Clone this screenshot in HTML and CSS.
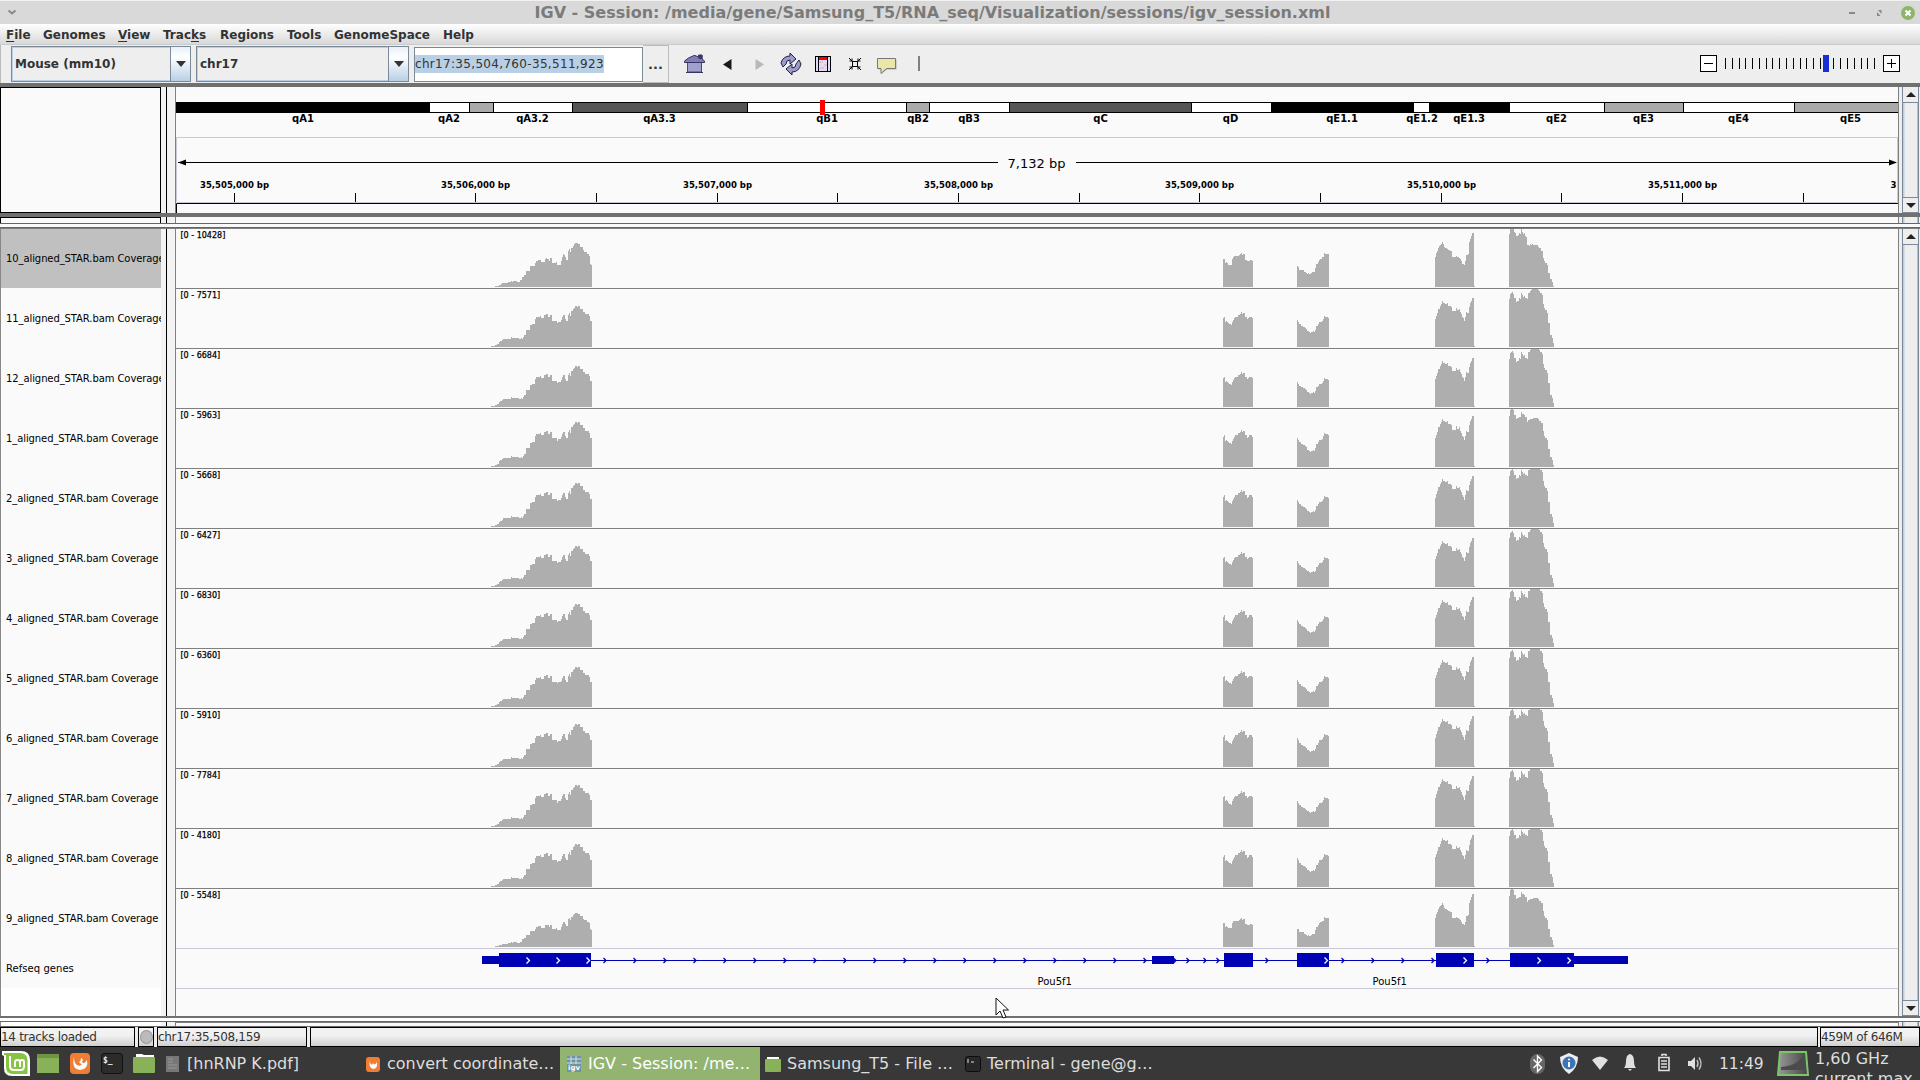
FILE: index.html
```html
<!DOCTYPE html>
<html lang="en">
<head>
<meta charset="utf-8">
<title>IGV - Session</title>
<link rel="stylesheet" href="styles.css">
</head>
<body>
<header class="titlebar">
  <svg class="win-menu" width="10" height="8" viewBox="0 0 10 8"><path d="M1.5 1.5L5 4.5L8.500 1.500" fill="none" stroke="#888" stroke-width="2"/></svg>
  <h1 class="title">IGV - Session: /media/gene/Samsung_T5/RNA_seq/Visualization/sessions/igv_session.xml</h1>
  <svg class="win-buttons" width="72" height="18" viewBox="0 0 72 18">
    <rect x="5" y="8" width="6" height="2" fill="#888"/>
    <path d="M34 6h3.500v4zM33 8v4h3.500z" fill="#888"/>
    <circle cx="64" cy="9" r="7" fill="#8fb56a"/><path d="M61.500 6.500l5 5m0-5l-5 5" stroke="#fff" stroke-width="2"/>
  </svg>
</header>
<nav class="menubar">
  <span class="m-file"><u>F</u>ile</span><span class="m-genomes">Genomes</span><span class="m-view"><u>V</u>iew</span><span class="m-tracks">Trac<u>k</u>s</span><span class="m-regions">Regions</span><span class="m-tools">Tools</span><span class="m-space">GenomeSpace</span><span>Help</span>
</nav>
<div class="toolbar">
  <div class="combo genome"><span>Mouse (mm10)</span><i></i></div>
  <div class="combo chrom"><span>chr17</span><i></i></div>
  <div class="locus"><mark>chr17:35,504,760-35,511,923</mark></div>
  <button class="more">...</button>
  <div class="icons">
    <svg viewBox="0 0 32 32"><rect x="8.500" y="14" width="14" height="10" fill="#a09fce" stroke="#4c497c"/><path d="M5.500 14.500v-1.500l4-3 5.500-2.500h1l3.500 1.500V7h3.500v4l2.500 2v1.500z" fill="#7f7db5" stroke="#37345f"/><rect x="19.500" y="7" width="4" height="4" fill="#3c3a66"/><path d="M7 24.500h17" stroke="#37345f"/></svg>
    <svg viewBox="0 0 32 32"><path d="M20.500 11v11L12 16.500z" fill="#1a1a1a"/></svg>
    <svg viewBox="0 0 32 32"><path d="M12.500 11v11l8.500-5.500z" fill="#b8b8b8"/></svg>
    <svg viewBox="0 0 32 32" fill="#9c9bd0" stroke="#20203c" stroke-width="1"><path d="M6 15q2-7 9-7V5l6 6-6 5v-4q-4 0-4 4l-3 3z"/><path d="M26 16q-2 8-9 8v3l-6-6 6-5v4q4 0 4-4l3-4z"/></svg>
    <svg viewBox="0 0 32 32"><rect x="8.500" y="8.500" width="15" height="15" fill="#dcdcf8" stroke="#000"/><path d="M11.500 9v14M20.500 9v14" stroke="#000"/><rect x="12" y="9" width="8" height="3" fill="red"/><path d="M12 14h4m1 3h3m-7 3h4" stroke="#f3bcc6" stroke-width="2"/></svg>
    <svg viewBox="0 0 32 32" stroke="#000" fill="none"><rect x="13.500" y="13.500" width="5" height="5"/><path d="M10 10l3 3m9-3l-3 3m-9 9l3-3m9 3l-3-3M10.500 13H13v-2.500M21.500 13H19v-2.500M10.500 19H13v2.500M21.500 19H19v2.500"/></svg>
    <svg viewBox="0 0 32 32"><path d="M7.500 11.500h18v10H16l-5 4v-4H7.500z" fill="#888" opacity=".6"/><path d="M6.500 10.500h18v10h-9l-5.500 5v-5H6.500z" fill="#ece6a8" stroke="#777"/></svg>
    <svg viewBox="0 0 32 32"><rect x="15" y="8" width="2" height="15" fill="#808080"/></svg>
  </div>
  <svg class="zoomer" width="202" height="20" viewBox="0 0 202 20"><g stroke="#000" fill="#fff"><rect x=".5" y="1.500" width="16" height="16"/><rect x="183.500" y="1.500" width="16" height="16"/><path d="M4 9.500h9M187 9.500h9M191.500 5v9"/></g><g id="zoom-ticks" fill="#000"></g><rect x="123" y="1" width="6" height="17" fill="#1a2fd0"/></svg>
</div>
<main>
  <section class="pane head">
    <div class="names boxed"></div><div class="gutter"></div>
    <div class="data"><svg id="ruler" width="1723" height="126" viewBox="176 87 1723 126"></svg></div>
    <div class="scroll"><b class="up"></b><b class="down"></b></div>
  </section>
  <section class="pane strip"><div class="names boxed"></div><div class="gutter"></div><div class="data"></div><div class="scroll"></div></section>
  <div class="divider"></div>
  <section class="pane tracks">
    <div class="names" id="names"></div><div class="gutter"></div>
    <div class="data"><div id="coverage"></div>
      <svg id="genes" width="1723" height="39" viewBox="176 949 1723 39"></svg>
    </div>
    <div class="scroll"><b class="up"></b><b class="down"></b></div>
  </section>
  <div class="divider low"></div>
  <section class="pane foot"><div class="names"></div><div class="gutter"></div><div class="data"></div><div class="scroll"></div></section>
</main>
<footer class="status">
  <div class="s1">14 tracks loaded</div><div class="s2"><i></i></div><div class="s3">chr17:35,508,159</div><div class="s4"></div><div class="s5">459M of 646M</div>
</footer>
<div class="taskbar">
  <svg class="launch" width="164" height="33" viewBox="0 0 164 33">
    <path d="M2 4h19q9 0 9 9v16H12q-8 0-8-8V9L2 8z" fill="#fff"/><path d="M4 6h16q7.500 0 7.500 7.500V27H13q-7 0-7-7V8H4z" fill="#86c442"/><path d="M10 9v10q0 4 4 4h7q3 0 3-4v-4q0-2-2-2t-2 2v5m0-5q0-2-2.500-2t-2.500 2v5" fill="none" stroke="#fff" stroke-width="2"/>
    <rect x="37" y="7" width="22" height="19" fill="#88b158"/><rect x="37" y="7" width="22" height="4" fill="#6d9544"/>
    <rect x="70" y="6" width="20" height="21" rx="4" fill="#ef7d34"/><path d="M74 10q-3 12 6 13 9-1 7-10-3 5-5 2 2-3-1-4 0 3-2 4 1 2 3 2-2 3-5 1-3-2-3-8z" fill="#fff"/>
    <rect x="101.500" y="6.500" width="21" height="20" rx="3" fill="#2b2b2b" stroke="#111"/><text x="103" y="16" class="prompt">$_</text>
    <path d="M136 7h6l2 1h10v4h-18z" fill="#fff"/><rect x="133" y="10" width="22" height="16" rx="1" fill="#88b158"/>
  </svg>
  <div class="task pdf"><svg width="16" height="18"><path d="M1 1h13v16H1z" fill="#777"/><path d="M3 4h5M3 7h5M3 10h9M3 13h9" stroke="#999"/></svg><span>[hnRNP K.pdf]</span></div>
  <div class="task web"><svg width="16" height="18"><rect x="1" y="2" width="14" height="15" rx="3" fill="#ef7d34"/><path d="M5 5q-2 7 3 9 5 0 4-7-2 4-4 1l-1 2-2-2z" fill="#fff"/></svg><span>convert coordinate…</span></div>
  <div class="task active"><svg width="16" height="18"><path d="M1 1h14v16H1z" fill="#6d93a5"/><path d="M1 4h14M5 1v8M10 1v8M1 8h14" stroke="#d5e1e5"/><text x="2" y="15" class="tiny">igv</text></svg><span>IGV - Session: /me…</span></div>
  <div class="task files"><svg width="16" height="18"><path d="M2 2h12v4H2z" fill="#fff"/><rect x="0" y="4" width="16" height="13" rx="1" fill="#88b158"/></svg><span>Samsung_T5 - File …</span></div>
  <div class="task term"><svg width="16" height="18"><rect x=".5" y="1.500" width="15" height="15" rx="2" fill="#282828" stroke="#0c0c0c"/><path d="M3 4v4M6 7h3" stroke="#ddd"/></svg><span>Terminal - gene@g…</span></div>
  <svg class="tray" width="180" height="33" viewBox="1528 0 180 33">
    <rect x="1530" y="7" width="15" height="20" rx="7.500" fill="#666"/><path d="M1533.500 12.500l8 8-4 4V9l4 4-8 8" fill="none" stroke="#fff" stroke-width="1.400"/>
    <path d="M1569 6l9 4q0 11-9 17-9-6-9-17z" fill="#eee"/><circle cx="1569" cy="16" r="6.500" fill="#3c74b8"/><path d="M1569 15v5" stroke="#fff" stroke-width="2"/><circle cx="1569" cy="12.500" r="1" fill="#fff"/>
    <path d="M1592 13q8-7 16 0l-8 10z" fill="#e0e0e0"/>
    <path d="M1624 21q2-2 2-7 0-6 4-7 4 1 4 7 0 5 2 7zM1628 22h4l-2 2z" fill="#e0e0e0"/>
    <path d="M1659 10.500h10v13h-10zM1662 9v-1.500h4V9M1661 14h6m-6 3h6m-6 3h6" fill="none" stroke="#e0e0e0" stroke-width="1.600"/>
    <path d="M1688 14h3l4-4v13l-4-4h-3z" fill="#e0e0e0"/><path d="M1697 13q2 3.500 0 7M1699 10.500q4 6 0 12" fill="none" stroke="#bbb" stroke-width="1.500"/>
  </svg>
  <time>11:49</time>
  <svg class="cpu" width="32" height="28" viewBox="0 0 32 28"><defs><linearGradient id="g"><stop offset="0" stop-color="#999"/><stop offset="1" stop-color="#444"/></linearGradient></defs><path d="M3 2h26l2 23H1z" fill="url(#g)" stroke="#7cc46c" stroke-width="2"/><path d="M4 17Q21 16 27 4v16H4z" fill="#4b4b4b"/></svg>
  <div class="freq">1,60 GHz<br>current max</div>
</div>
<svg class="pointer" width="16" height="24" viewBox="0 0 16 24"><path d="M1 1v17l4-4 3 7 3-1-3-7h5.500z" fill="#fff" stroke="#111"/></svg>
<script src="script.js"></script>
</body>
</html>
```
FILE: styles.css
```css
* { box-sizing: border-box; }
body { margin: 0; width: 1920px; height: 1080px; overflow: hidden; display: flex; flex-direction: column; background: #eee; font: 12px "DejaVu Sans", sans-serif; color: #333; }
body > * { flex-shrink: 0; }
svg { display: block; flex: none; }
.titlebar { height: 24px; background: #d9d9d9; border-top: 1px solid #f2f2f2; display: flex; align-items: center; padding: 0 4px 0 7px; }
.title { flex: 1; margin: 0; padding-left: 4px; text-align: center; font: bold 16px "DejaVu Sans", sans-serif; color: #7b7b7b; white-space: nowrap; }
.menubar { height: 21px; background: linear-gradient(#fff, #d8d8d8); border-bottom: 1px solid #ccc; display: flex; align-items: center; font-weight: bold; padding: 1px 0 0 6px; white-space: nowrap; }
.menubar span { flex: none; }
.menubar u { text-underline-offset: 2px; }
.m-file { width: 37px; }
.m-genomes { width: 75px; }
.m-view { width: 45px; }
.m-tracks { width: 57px; }
.m-regions { width: 67px; }
.m-tools { width: 47px; }
.m-space { width: 109px; }
.toolbar { height: 38px; border-left: 1px solid #bbb; display: flex; align-items: center; padding-left: 10px; }
.combo { display: flex; height: 36px; border: 1px solid #7a8a99; font-weight: bold; align-items: center; box-shadow: inset 0 0 0 1px #b8cfe5; padding-left: 3px; }
.combo span { flex: 1; }
.combo i { width: 20px; height: 34px; border-left: 1px solid #7a8a99; background: linear-gradient(#e8f0f8, #fff 30%, #b8cfe5); display: grid; place-items: center; }
.combo i::after { content: ""; border: 5.500px solid transparent; border-top: 6px solid #333; border-bottom: 0; }
.genome { width: 180px; margin-right: 5px; }
.chrom { width: 213px; margin-right: 5px; }
.locus { width: 229px; height: 35px; background: #fff; border: 1px solid #7a8a99; display: flex; align-items: center; }
.locus mark { background: #b8cfe5; color: #333; letter-spacing: .32px; padding: 2px 0; }
.more { width: 26px; height: 38px; border: 1px solid #bbb; border-left: 0; background: #eee; padding: 0; font: bold 13px "DejaVu Sans", sans-serif; color: #333; }
.icons { display: flex; padding-left: 10px; flex: 1; }
.icons svg { width: 32px; height: 32px; }
.zoomer { margin-right: 18px; }
.pane { display: flex; }
.names { width: 161px; border-left: 1px solid #888; background: #fff; overflow: hidden; flex: none; }
.boxed { border: 1px solid #000; background: #fafafa; }
.gutter { width: 14px; flex: none; background: linear-gradient(90deg, #f3f3f3 5px, #000 5px 6px, #f3f3f3 6px); }
.data { width: 1724px; flex: none; border-left: 1px solid #808080; border-right: 1px solid #808080; background: #fafafa; overflow: hidden; }
.scroll { width: 17px; margin-left: 3px; border-left: 1px solid #7a8a99; background: linear-gradient(90deg, #b8cfe5 1px, #eee 2px 14px, #7a8a99 15px); display: flex; flex-direction: column; justify-content: space-between; }
.scroll b { height: 16px; width: 15px; display: grid; place-items: center; background: #eee; border-bottom: 1px solid #7a8a99; }
.scroll .down { border-top: 1px solid #7a8a99; }
.up::after { content: ""; border: 5px solid transparent; border-bottom: 5px solid #222; border-top: 0; }
.down::after { content: ""; border: 5px solid transparent; border-top: 5px solid #222; border-bottom: 0; }
.head { height: 134px; border-top: 4px solid #707070; border-bottom: 4px solid #707070; }
.strip { height: 6px; }
.strip .boxed { border-bottom: 0; }
.divider { height: 5px; background: #fafafa; border-top: 1px solid #666; border-bottom: 1px solid #666; }
.tracks { height: 788px; border-top: 1px solid #808080; }
.name-row { height: 60px; display: flex; align-items: center; padding-left: 5px; color: #000; font-size: 10px; white-space: nowrap; background: #fafafa; letter-spacing: -.09px; }
.name-row.first { height: 59px; background: #c0c0c0; }
.name-row.ref { height: 40px; letter-spacing: .05px; }
.cov { display: block; }
#coverage { border-bottom: 1px solid #c8c8d8; height: 720px; }
#genes { box-sizing: content-box; border-bottom: 1px solid #c8c8d8; }
.low { border-top: 2px solid #707070; height: 6px; background: #fff; }
.foot { height: 5px; border-bottom: 1px solid #666; }
.foot .data { border-top: 1px solid #808080; }
.status { height: 20px; display: flex; gap: 3px; background: #eee; white-space: nowrap; }
.status div { border: 1px solid #000; outline: 0; background: linear-gradient(#f2f2f2 40%, #cfcfcf); line-height: 18px; overflow: hidden; }
.s1 { width: 135px; letter-spacing: -.35px; }
.s2 { width: 16px; display: grid; place-items: center; }
.s2 i { width: 13px; height: 14px; border-radius: 50%; background: #bbb; border: 1px solid #999; }
.s3 { width: 150px; letter-spacing: -.35px; }
.s1, .s3 { letter-spacing: -.3px; }
.s4 { flex: 1; }
.s5 { width: 100px; margin-left: -1px; letter-spacing: -.35px; }
.taskbar { height: 33px; background: #383838; display: flex; align-items: center; font-size: 16px; color: #ddd; white-space: nowrap; overflow: hidden; }
.prompt { font: bold 8px "DejaVu Sans Mono", monospace; fill: #eee; }
.tiny { font: bold 7px "DejaVu Sans", sans-serif; fill: #fff; }
.task { display: flex; align-items: center; height: 33px; gap: 6px; width: 200px; flex: none; }
.pdf { padding-left: 1px; }
.web { margin-left: 1px; width: 195px; }
.active { background: #93b470; color: #fff; padding-left: 6px; }
.files { padding-left: 5px; }
.term { padding-left: 5px; }
.tray { margin-left: 368px; }
time { width: 58px; margin-left: 11px; flex: none; font-size: 15.500px; }
.freq { margin: 2px 0 0 6px; line-height: 20px; align-self: flex-start; }
.pointer { position: absolute; left: 995px; top: 997px; }
.band { font: bold 10px "DejaVu Sans", sans-serif; text-anchor: middle; }
.span { font: 13px "DejaVu Sans", sans-serif; text-anchor: middle; }
.pos { font: bold 9.500px "DejaVu Sans Condensed", "DejaVu Sans", sans-serif; }
.range { font: 8px "DejaVu Sans", sans-serif; stroke: #000; stroke-width: .25px; }
.gene { font: 10px "DejaVu Sans", sans-serif; }
```
FILE: script.js
```js
// Zoom slider ticks
let ticks = "";
for (let i = 0; i < 23; i++) ticks += `<rect x="${Math.round(25 + i * 6.78)}" y="4" width="1" height="11"/>`;
document.getElementById("zoom-ticks").innerHTML = ticks;

// Cytobands: [end x, fill, label, label centre]
const bands = [[429,"#000","qA1",303],[469,"#fff","qA2",449],[493,"#aaa","",0],[572,"#fff","qA3.2",532.5],[747,"#555","qA3.3",659.5],[906,"#fff","qB1",827],[929,"#aaa","qB2",918],[1009,"#fff","qB3",969],[1191,"#555","qC",1100.5],[1271,"#fff","qD",1230.5],[1413,"#000","qE1.1",1342],[1429,"#fff","qE1.2",1422],[1509,"#000","qE1.3",1469],[1604,"#fff","qE2",1556.5],[1683,"#aaa","qE3",1643.5],[1794,"#fff","qE4",1738.5],[1899,"#aaa","qE5",1850.5]];
let r = "", left = 175;
for (const [end, fill, label, cx] of bands) {
  r += `<rect x="${left + .5}" y="102.5" width="${end - left}" height="10" fill="${fill}" stroke="#000"/>`;
  if (label) r += `<text class="band" x="${cx}" y="122">${label}</text>`;
  left = end;
}
r += `<rect x="820" y="100" width="5" height="15" fill="red"/><path d="M176.500 202V137.500H1897.500V202.500H177" fill="none" stroke="#c8c8d8"/>
<path d="M178 162.500H998M1076 162.500H1896M176.500 213V203.500H1898" fill="none" stroke="#000"/><path d="M178 162.500l8-3v6zM1897 162.500l-8-3v6z"/>
<text class="span" x="1036.500" y="168">7,132 bp</text>`;
for (let i = 0; i < 14; i++) {
  const x = Math.round(234 + i * 120.67);
  r += `<rect x="${x}" y="193" width="1" height="9"/>`;
  if (i % 2 === 0) r += `<text class="pos" x="${x - 34}" y="188" textLength="69" lengthAdjust="spacingAndGlyphs">35,${505 + i / 2},000 bp</text>`;
}
r += '<text class="pos" x="1890.500" y="188">3</text>';
document.getElementById("ruler").innerHTML = r;

// Coverage profiles per exon: [offset x, height] steps; the last entry closes the block
const wide = [
  [[495,1],[499,2],[501,3],[502,4],[508,5],[511,6],[512,5],[513,6],[517,5],[520,7],[522,10],[524,12],[526,16],[530,21],[535,24],[536,26],[538,27],[541,25],[545,28],[546,29],[547,28],[549,26],[550,29],[552,24],[556,25],[557,22],[561,26],[562,30],[563,33],[564,32],[565,30],[566,27],[568,36],[569,38],[570,35],[571,39],[573,41],[574,43],[575,44],[577,44],[578,43],[580,40],[583,37],[584,35],[587,33],[589,31],[590,23],[591,22],[592,0]],
  [[1223,28],[1225,24],[1226,25],[1227,24],[1228,22],[1232,28],[1233,30],[1234,31],[1239,32],[1240,33],[1241,34],[1242,32],[1243,33],[1245,27],[1247,26],[1250,27],[1252,26],[1253,0]],
  [[1297,21],[1298,20],[1299,17],[1304,15],[1306,14],[1307,13],[1308,14],[1309,13],[1311,14],[1312,15],[1315,19],[1316,23],[1318,25],[1319,27],[1320,28],[1322,30],[1324,34],[1325,33],[1329,0]],
  [[1435,30],[1436,34],[1437,36],[1438,39],[1439,41],[1440,42],[1441,43],[1442,45],[1443,43],[1444,40],[1445,39],[1447,38],[1448,37],[1450,36],[1452,30],[1456,31],[1457,30],[1459,29],[1460,28],[1461,26],[1462,23],[1464,22],[1465,26],[1466,32],[1468,33],[1469,45],[1470,48],[1471,51],[1472,54],[1474,1],[1475,0]],
  [[1509,53],[1510,58],[1514,55],[1515,54],[1516,51],[1518,52],[1519,54],[1520,53],[1521,58],[1522,55],[1523,53],[1524,54],[1525,51],[1526,50],[1527,42],[1529,41],[1530,43],[1531,42],[1532,43],[1533,42],[1538,40],[1539,39],[1541,36],[1543,29],[1544,26],[1545,24],[1547,22],[1548,14],[1550,8],[1552,5],[1553,1],[1554,0]]
];
const usual = [
  [[491,1],[495,2],[497,3],[499,5],[500,6],[502,7],[503,8],[511,10],[512,9],[519,8],[521,9],[522,8],[523,10],[524,12],[526,17],[530,22],[532,23],[535,28],[536,30],[540,31],[541,29],[544,32],[546,33],[548,30],[550,32],[552,26],[557,24],[558,25],[561,27],[562,30],[563,32],[565,28],[566,26],[568,32],[569,34],[570,31],[571,36],[573,38],[574,39],[575,41],[577,40],[578,41],[580,38],[583,35],[585,33],[589,31],[590,26],[592,0]],
  [[1223,29],[1224,30],[1225,25],[1226,26],[1227,25],[1228,24],[1229,23],[1231,22],[1232,25],[1233,27],[1234,29],[1235,30],[1238,32],[1240,33],[1241,35],[1242,33],[1243,34],[1245,30],[1247,28],[1248,29],[1249,30],[1252,29],[1253,0]],
  [[1297,27],[1298,25],[1299,23],[1301,21],[1303,20],[1305,19],[1306,18],[1307,16],[1309,15],[1310,14],[1311,15],[1313,16],[1314,15],[1315,17],[1316,21],[1318,23],[1319,25],[1322,26],[1323,28],[1324,31],[1325,30],[1328,29],[1329,0]],
  [[1435,28],[1436,31],[1437,34],[1438,38],[1440,41],[1441,43],[1442,46],[1443,44],[1445,43],[1447,44],[1448,41],[1451,40],[1452,36],[1456,39],[1457,37],[1459,38],[1460,35],[1461,33],[1462,30],[1463,29],[1464,26],[1465,30],[1466,35],[1467,34],[1469,40],[1470,44],[1471,46],[1472,49],[1474,1],[1475,0]],
  [[1509,48],[1510,53],[1511,54],[1512,55],[1513,53],[1514,49],[1516,45],[1517,46],[1519,49],[1520,48],[1521,54],[1522,52],[1523,50],[1524,51],[1525,49],[1527,48],[1528,54],[1530,56],[1531,57],[1532,58],[1538,57],[1539,56],[1540,54],[1542,52],[1543,43],[1544,39],[1545,37],[1547,34],[1548,24],[1550,12],[1552,9],[1553,4],[1554,0]]
];
const flat = [[1509,51],[1510,57],[1511,58],[1513,57],[1514,52],[1516,48],[1517,49],[1519,50],[1521,55],[1522,53],[1524,52],[1525,50],[1527,45],[1528,47],[1530,48],[1533,49],[1538,48],[1539,46],[1541,44],[1543,36],[1544,31],[1545,29],[1547,27],[1548,18],[1550,10],[1552,7],[1553,2],[1554,0]];

// name, range maximum, profile set, height factor per exon
const tracks = [
  ["10", 10428, wide, [1,1,1,1,1]],
  ["11", 7571, usual, [1,1,1,1,1]],
  ["12", 6684, usual, [1,1,.93,1.01,1.01]],
  ["1", 5963, [...usual.slice(0,4), flat], [1.1,1.05,1.09,1.04,1]],
  ["2", 5668, usual, [1.07,1.05,1,1.05,1.06]],
  ["3", 6427, usual, [1,1,.97,1.01,1.02]],
  ["4", 6830, usual, [1.04,1.05,1,1.03,1.03]],
  ["5", 6360, usual, [.98,1.03,1,1.02,1.03]],
  ["6", 5910, usual, [1.04,1.05,1.06,1.05,1.06]],
  ["7", 7784, usual, [1.02,1.02,.97,1.05,1.03]],
  ["8", 4180, usual, [1.04,1.05,1.06,1.06,1.06]],
  ["9", 5548, [...wide.slice(0,4), flat], [.77,.85,.88,.98,1]]
];
let names = "", cov = "";
tracks.forEach(([name, max, shapes, factors], i) => {
  let d = "";
  shapes.forEach((steps, e) => {
    d += `M${steps[0][0]} 59`;
    for (const [x, h] of steps) d += `H${x}V${h === 0 ? 59 : Math.max(0, 59 - Math.round(h * factors[e]))}`;
    d += "Z";
  });
  const border = i < 11 ? '<rect x="175" y="60" width="1724" height="1" fill="#808080"/>' : "";
  names += `<div class="name-row${i ? "" : " first"}">${name}_aligned_STAR.bam Coverage</div>`;
  cov += `<svg class="cov" width="1723" height="${i < 11 ? 60 : 59}" viewBox="176 1 1723 ${i < 11 ? 60 : 59}"><path d="${d}" fill="#aeaeae"/>${border}<text class="range" x="180.500" y="10">[0 - ${max}]</text></svg>`;
});
document.getElementById("names").innerHTML = names + '<div class="name-row ref">Refseq genes</div>';
document.getElementById("coverage").innerHTML = cov;

// Gene model
let g = '<rect x="482" y="960" width="1100" height="1"/>';
for (const [a, b] of [[482,499],[1152,1174],[1574,1628]]) g += `<rect x="${a}" y="956" width="${b - a}" height="8"/>`;
for (const [a, b] of [[499,591],[1224,1253],[1297,1329],[1436,1474],[1510,1574]]) g += `<rect x="${a}" y="953" width="${b - a}" height="14"/>`;
const chevron = (x, c, s) => `<path d="M${x - 1.500} ${960.500 - s}l${s} ${s}l-${s} ${s}" fill="none" stroke="${c}" stroke-width="1.300"/>`;
for (let x = 605; x < 1150; x += 30) g += chevron(x, "#0000b4", 2.5);
for (const x of [1175,1188,1205,1218,1267,1343,1373,1403,1433,1488]) g += chevron(x, "#0000b4", 2.5);
for (const x of [528,558,588,1326,1465,1539,1569]) g += chevron(x, "#fff", 3);
document.getElementById("genes").innerHTML = `<g fill="#0000b4">${g}</g><text class="gene" x="1037.500" y="985">Pou5f1</text><text class="gene" x="1372.500" y="985">Pou5f1</text>`;
```
